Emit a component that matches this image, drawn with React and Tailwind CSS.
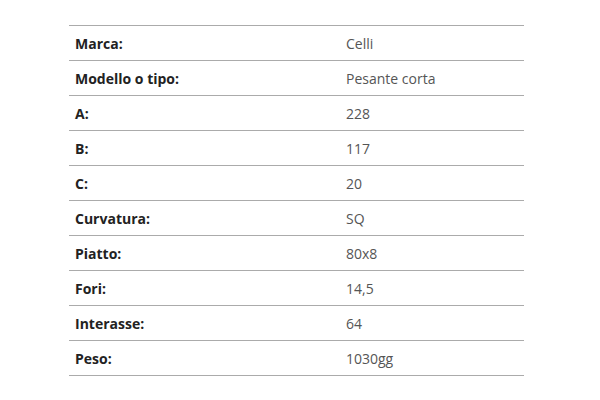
const rows = [
  ['Marca:', 'Celli'],
  ['Modello o tipo:', 'Pesante corta'],
  ['A:', '228'],
  ['B:', '117'],
  ['C:', '20'],
  ['Curvatura:', 'SQ'],
  ['Piatto:', '80x8'],
  ['Fori:', '14,5'],
  ['Interasse:', '64'],
  ['Peso:', '1030gg'],
]

export default function App() {
  return (
    <div className="w-[600px] h-[400px] bg-white pt-[25px] pl-[69px] font-['Open_Sans',sans-serif] text-[14px]">
      <div className="w-[455px] border-b border-[#ababab]">
        {rows.map(([label, value]) => (
          <div key={label} className="flex h-[35px] items-center border-t border-[#ababab]">
            <div className="w-[271px] pl-[6px] font-bold text-[#222]">{label}</div>
            <div className="pl-[6px] text-[#555]">{value}</div>
          </div>
        ))}
      </div>
    </div>
  )
}
